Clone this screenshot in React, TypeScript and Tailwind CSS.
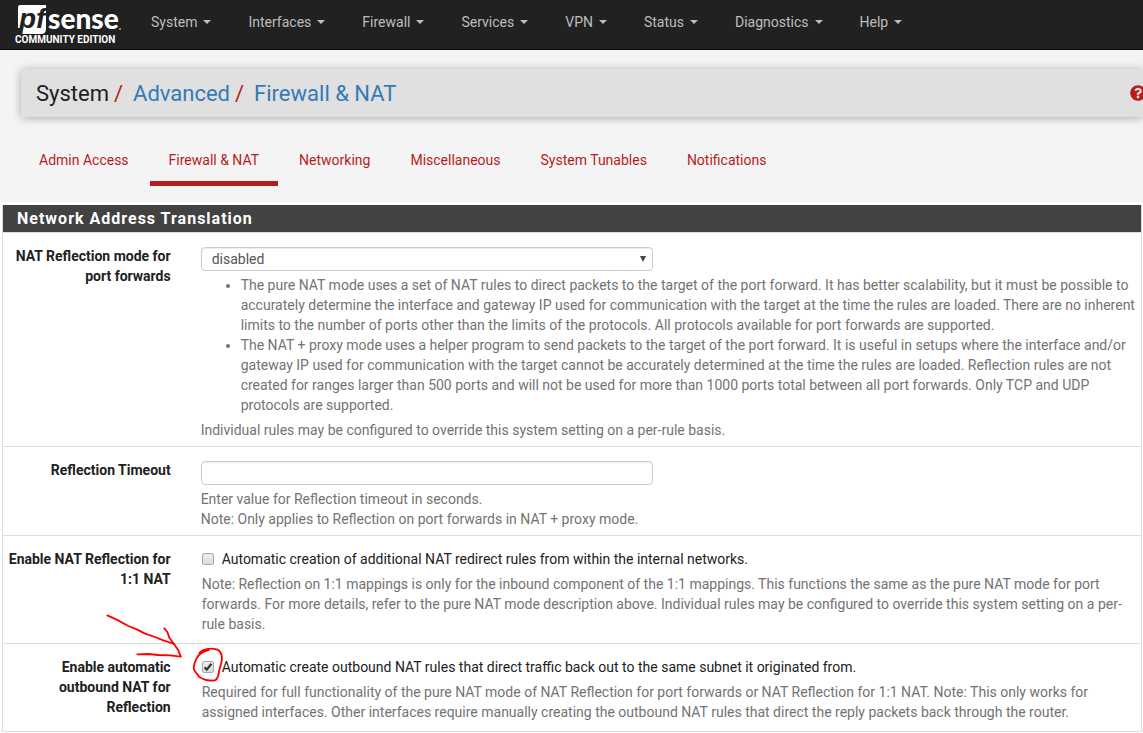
import type { ReactNode } from 'react'
import { FaQuestionCircle } from 'react-icons/fa'

const menuItems = ['System', 'Interfaces', 'Firewall', 'Services', 'VPN', 'Status', 'Diagnostics', 'Help']

const tabs = ['Admin Access', 'Firewall & NAT', 'Networking', 'Miscellaneous', 'System Tunables', 'Notifications']

function Logo() {
  return (
    <a href="#" aria-label="pfSense Community Edition" className="block w-[134px] shrink-0 pl-[15px] pt-[5px]">
      <svg width="108" height="40" viewBox="0 0 108 40" className="block overflow-visible">
        <path d="M5 0H31V24Q31 29 26 29H6L7 23H3V3Q3 0 5 0Z" fill="#fff" />
        <text x="4" y="23" fontFamily="'Liberation Sans', sans-serif" fontSize="28" fontWeight="700" fontStyle="italic" fill="#212121">
          pf
        </text>
        <text x="33" y="24" fontFamily="Lato, sans-serif" fontSize="28" fontWeight="900" fill="#fff">
          sense
        </text>
        <circle cx="105" cy="24" r="1" fill="#aaa" />
        <text x="0" y="38" fontFamily="Roboto, sans-serif" fontSize="10" fontWeight="700" fill="#fff">
          COMMUNITY EDITION
        </text>
      </svg>
    </a>
  )
}

function Row({ label, htmlFor, children }: { label: string; htmlFor: string; children: ReactNode }) {
  return (
    <div className="relative grid grid-cols-12 border-b border-[#ddd]">
      <label htmlFor={htmlFor} className="col-span-2 pt-[13px] pr-[22px] pl-1 text-right font-bold text-[#212121]">
        {label}
      </label>
      <div className="col-span-10 pr-1 pl-2">{children}</div>
    </div>
  )
}

function Check({ id, text, checked = false }: { id: string; text: string; checked?: boolean }) {
  return (
    <div className="flex items-center pt-[13px]">
      <span className="relative mr-2 ml-px block h-3 w-3">
        <input
          id={id}
          type="checkbox"
          defaultChecked={checked}
          className="peer block h-3 w-3 appearance-none rounded-[2px] border border-[#a9a9a9] bg-linear-to-b from-[#eee] to-[#dcdcdc]"
        />
        <svg viewBox="0 0 12 12" className="pointer-events-none absolute inset-0 hidden h-3 w-3 peer-checked:block">
          <path d="M2.600 6.400 4.800 8.600 9.400 2.800" fill="none" stroke="#333" strokeWidth="2.200" />
        </svg>
      </span>
      <label htmlFor={id} className="text-[#212121]">{text}</label>
    </div>
  )
}

// hand-drawn marker pointing at the outbound NAT checkbox
function Marker() {
  return (
    <svg viewBox="0 0 450 270" className="pointer-events-none absolute -top-11 left-[77px] h-[90px] w-[150px]">
      <g fill="none" stroke="#f00" strokeWidth="5.500" strokeLinecap="round" strokeLinejoin="round">
        <path d="M82 46 110 59 145 78 170 88 195 101 225 111 250 121 283 132" />
        <path d="M253 85 262 96 268 113 284 135 295 151 302 169" />
        <path d="M172 163 205 162 235 165 270 166 302 170" />
        <path d="M386 150C365 155 356 162 350 175C344 187 341 195 341 205C343 217 353 221 357 230C367 237 385 242 401 242C411 241 414 232 416 222C417 206 425 192 426 177C426 164 420 153 412 149C397 144 380 146 368 151L358 159" />
      </g>
    </svg>
  )
}

export default function App() {
  return (
    <div className="min-h-screen overflow-x-hidden bg-white font-[Roboto,sans-serif] text-[14px] leading-5 text-[#212121]">
      <div className="bg-[#f4f4f4] pb-4">
        <nav className="flex h-[50px] border-b border-[#080808] bg-[#212121]">
          <Logo />
          <ul className="flex">
            {menuItems.map((item) => (
              <li key={item}>
                <button className="flex items-center pt-3 pr-5 pl-[17px] text-[#bdbdbd]">
                  {item}
                  <span className="ml-[6px] border-x-4 border-t-4 border-x-transparent border-t-[#bdbdbd]" />
                </button>
              </li>
            ))}
          </ul>
        </nav>

        <header className="mt-[19px] ml-[21px] flex h-12 items-center justify-between rounded-l-[2px] bg-[#e0e0e0] pl-[15px] shadow-[0_1px_10px_rgba(0,0,0,0.3)]">
          <h1 className="flex pt-px text-[22px] leading-6">
            System
            <span className="mr-[6px] ml-[5px] text-[#b71c1c]">/</span>
            <a href="#" className="ml-1 text-[#337ab7]">Advanced</a>
            <span className="mr-[6px] ml-[5px] text-[#b71c1c]">/</span>
            <a href="#" className="ml-1 text-[#337ab7]">Firewall &amp; NAT</a>
          </h1>
          <a href="#" aria-label="Help" className="-mr-[3px] shrink-0 text-[#b71c1c]">
            <FaQuestionCircle className="h-4 w-4" />
          </a>
        </header>

        <ul className="mt-[33px] ml-[19px] flex">
          {tabs.map((tab) => (
            <li key={tab} className="mx-px">
              <a
                href="#"
                className={`block border-b-[5px] px-[19px] pb-[11px] text-[#b71c1c] ${tab === 'Firewall & NAT' ? 'border-[#b71c1c]' : 'border-transparent'}`}
              >
                {tab}
              </a>
            </li>
          ))}
        </ul>
      </div>

      <section className="mt-[3px] mr-px ml-[2px] border-x border-[#ddd] text-[#737373]">
        <h2 className="border-b border-[#ddd] bg-[#424242] pr-3 pl-[14px] text-[16px] leading-[27px] font-bold tracking-[1px] text-white">
          Network Address Translation
        </h2>

        <Row label="NAT Reflection mode for port forwards" htmlFor="natreflection">
          <div className="pt-[14px] pb-[6px]">
            <div className="relative w-[452px] max-w-full">
              <select
                id="natreflection"
                className="block h-6 w-full appearance-none rounded-[4px] border border-[#ccc] bg-white px-[10px] leading-5 text-[#555] shadow-[inset_0_1px_1px_rgba(0,0,0,0.075)]"
              >
                <option>disabled</option>
                <option>NAT + proxy</option>
                <option>Pure NAT</option>
              </select>
              <span className="pointer-events-none absolute top-[9px] right-[7px] border-x-[3px] border-t-[6px] border-x-transparent border-t-[#444]" />
            </div>
            <ul className="mt-1 list-disc pl-10">
              <li>
                The pure NAT mode uses a set of NAT rules to direct packets to the target of the port forward. It has better
                scalability, but it must be possible to accurately determine the interface and gateway IP used for communication
                with the target at the time the rules are loaded. There are no inherent limits to the number of ports other than
                the limits of the protocols. All protocols available for port forwards are supported.
              </li>
              <li>
                The NAT + proxy mode uses a helper program to send packets to the target of the port forward. It is useful in
                setups where the interface and/or gateway IP used for communication with the target cannot be accurately
                determined at the time the rules are loaded. Reflection rules are not created for ranges larger than 500 ports
                and will not be used for more than 1000 ports total between all port forwards. Only TCP and UDP protocols are
                supported.
              </li>
            </ul>
            <p className="mt-[5px]">Individual rules may be configured to override this system setting on a per-rule basis.</p>
          </div>
        </Row>

        <Row label="Reflection Timeout" htmlFor="reflectiontimeout">
          <div className="pt-[14px] pb-[6px]">
            <input
              id="reflectiontimeout"
              type="text"
              className="block h-6 w-[452px] max-w-full rounded-[4px] border border-[#ccc] bg-white px-[10px] text-[#555] shadow-[inset_0_1px_1px_rgba(0,0,0,0.075)]"
            />
            <p className="mt-1">
              Enter value for Reflection timeout in seconds.
              <br />
              Note: Only applies to Reflection on port forwards in NAT + proxy mode.
            </p>
          </div>
        </Row>

        <Row label="Enable NAT Reflection for 1:1 NAT" htmlFor="binat">
          <Check id="binat" text="Automatic creation of additional NAT redirect rules from within the internal networks." />
          <p className="mt-[5px] pb-[9px] pl-px">
            Note: Reflection on 1:1 mappings is only for the inbound component of the 1:1 mappings. This functions the same as
            the pure NAT mode for port forwards. For more details, refer to the pure NAT mode description above. Individual rules
            may be configured to override this system setting on a per-rule basis.
          </p>
        </Row>

        <Row label="Enable automatic outbound NAT for Reflection" htmlFor="outbound">
          <Check
            id="outbound"
            checked
            text="Automatic create outbound NAT rules that direct traffic back out to the same subnet it originated from."
          />
          <p className="mt-[5px] pb-[9px] pl-px">
            Required for full functionality of the pure NAT mode of NAT Reflection for port forwards or NAT Reflection for 1:1
            NAT. Note: This only works for assigned interfaces. Other interfaces require manually creating the outbound NAT rules
            that direct the reply packets back through the router.
          </p>
          <Marker />
        </Row>
      </section>
    </div>
  )
}
